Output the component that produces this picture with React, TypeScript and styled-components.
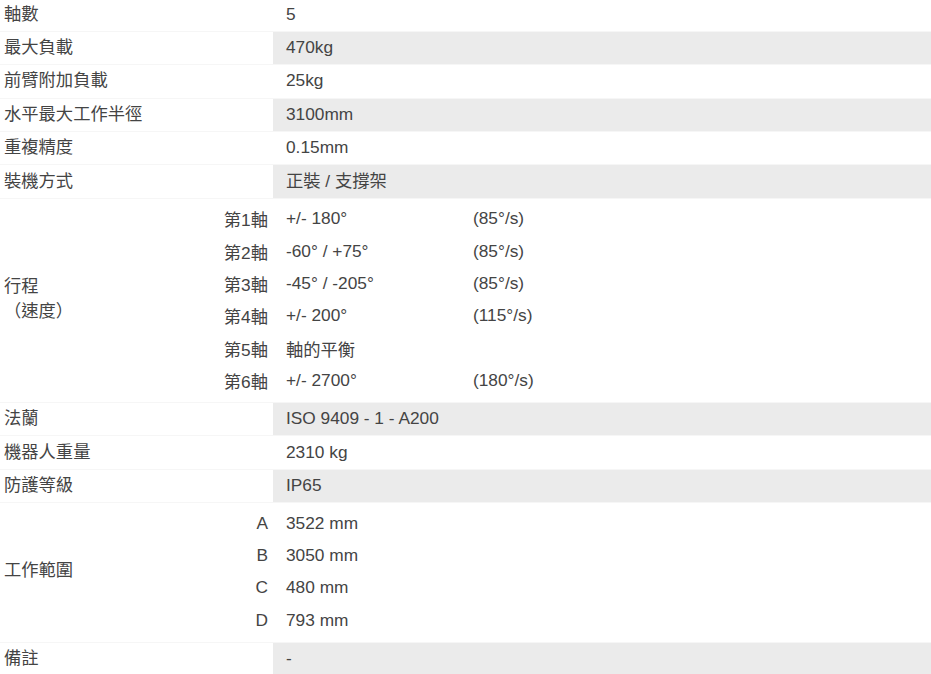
import React from 'react'
import styled, { createGlobalStyle } from "styled-components";

const GlobalStyle = createGlobalStyle`
  body {
    margin: 0;
    background: #fff;
  }
`;

const Table = styled.div`
  width: 931px;
  margin-top: -1.6px;
  font-family: "Liberation Sans", "Noto Sans CJK TC", sans-serif;
  font-size: 17.3px;
  color: #444;
`;

const Row = styled.div`
  display: grid;
  grid-template-columns: 273px 1fr;
  height: 33.4px;
  border-bottom: 1px solid #f6f6f6;
  box-sizing: border-box;
`;

const Label = styled.div`
  display: flex;
  align-items: center;
  padding: 0 0 2px 4px;
  line-height: 22px;
`;

const Value = styled.div<{ $shaded?: boolean }>`
  display: flex;
  align-items: center;
  padding: 0 0 2px 13px;
  line-height: 22px;
  background: ${(p) => (p.$shaded ? "#ebebeb" : "transparent")};
`;

const Block = styled.div<{ $rows: number }>`
  display: grid;
  grid-template-columns: 200px 73px 200px 1fr;
  grid-template-rows: repeat(${(p) => p.$rows}, 32.3px);
  padding: 4px 0 5.5px;
  border-bottom: 1px solid #f6f6f6;
`;

const BlockLabel = styled.div`
  grid-column: 1;
  grid-row: 1 / -1;
  align-self: center;
  padding: 0 0 2px 4px;
  line-height: 25px;
`;

const SubName = styled.div`
  grid-column: 2;
  display: flex;
  align-items: center;
  justify-content: flex-end;
  padding-right: 5px;
`;

const SubValue = styled.div`
  grid-column: 3;
  display: flex;
  align-items: center;
  padding-left: 13px;
`;

const SubSpeed = styled.div`
  grid-column: 4;
  display: flex;
  align-items: center;
`;

type Spec = { label: string; value: string };

const top: Spec[] = [
  { label: "軸數", value: "5" },
  { label: "最大負載", value: "470kg" },
  { label: "前臂附加負載", value: "25kg" },
  { label: "水平最大工作半徑", value: "3100mm" },
  { label: "重複精度", value: "0.15mm" },
  { label: "裝機方式", value: "正裝 / 支撐架" },
];

const axes = [
  { name: "第1軸", value: "+/- 180°", speed: "(85°/s)" },
  { name: "第2軸", value: "-60° / +75°", speed: "(85°/s)" },
  { name: "第3軸", value: "-45° / -205°", speed: "(85°/s)" },
  { name: "第4軸", value: "+/- 200°", speed: "(115°/s)" },
  { name: "第5軸", value: "軸的平衡", speed: "" },
  { name: "第6軸", value: "+/- 2700°", speed: "(180°/s)" },
];

const middle: Spec[] = [
  { label: "法蘭", value: "ISO 9409 - 1 - A200" },
  { label: "機器人重量", value: "2310 kg" },
  { label: "防護等級", value: "IP65" },
];

const ranges = [
  { name: "A", value: "3522 mm" },
  { name: "B", value: "3050 mm" },
  { name: "C", value: "480 mm" },
  { name: "D", value: "793 mm" },
];

const SpecRow = ({ spec, shaded }: { spec: Spec; shaded: boolean }) => (
  <Row>
    <Label>{spec.label}</Label>
    <Value $shaded={shaded}>{spec.value}</Value>
  </Row>
);

const App = () => {
  return (
    <>
      <GlobalStyle />
      <Table>
        {top.map((s, i) => (
          <SpecRow key={s.label} spec={s} shaded={i % 2 === 1} />
        ))}
        <Block $rows={axes.length}>
          <BlockLabel>
            行程
            <br />
            （速度）
          </BlockLabel>
          {axes.map((a, i) => (
            <React.Fragment key={a.name}>
              <SubName style={{ gridRow: i + 1 }}>{a.name}</SubName>
              <SubValue style={{ gridRow: i + 1 }}>{a.value}</SubValue>
              <SubSpeed style={{ gridRow: i + 1 }}>{a.speed}</SubSpeed>
            </React.Fragment>
          ))}
        </Block>
        {middle.map((s, i) => (
          <SpecRow key={s.label} spec={s} shaded={i % 2 === 0} />
        ))}
        <Block $rows={ranges.length}>
          <BlockLabel>工作範圍</BlockLabel>
          {ranges.map((r, i) => (
            <React.Fragment key={r.name}>
              <SubName style={{ gridRow: i + 1 }}>{r.name}</SubName>
              <SubValue style={{ gridRow: i + 1 }}>{r.value}</SubValue>
            </React.Fragment>
          ))}
        </Block>
        <SpecRow spec={{ label: "備註", value: "-" }} shaded={true} />
      </Table>
    </>
  );
};

export default App
